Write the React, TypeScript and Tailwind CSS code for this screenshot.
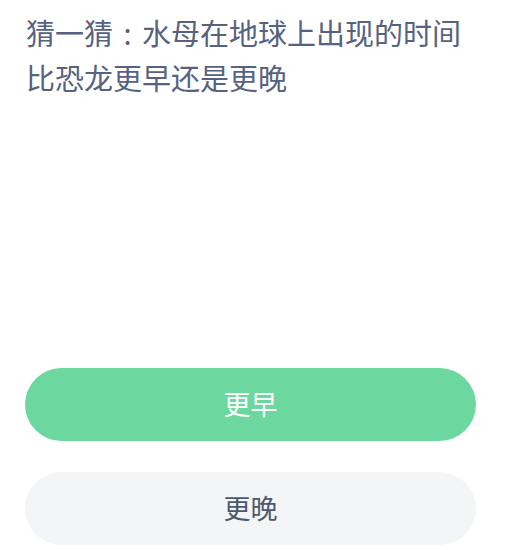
export default function App() {
  return (
    <div
      className="flex h-[550px] w-[506px] flex-col bg-white px-[25px]"
      style={{ fontFamily: '"Noto Sans CJK SC", "Noto Sans", sans-serif' }}
    >
      <h1 className="mt-[10px] pl-[1px] text-[29px] font-normal leading-[45px] text-[#56627f]">
        猜一猜<span className="inline-block w-[29px] text-center">:</span>水母在地球上出现的时间
        <br />
        比恐龙更早还是更晚
      </h1>

      <div className="flex-1" />

      <div className="flex flex-col gap-[31px] pb-[5px]">
        <button className="flex h-[73px] w-[451px] items-center justify-center rounded-full bg-[#6cd89f] text-[27px] text-white">
          更早
        </button>
        <button className="flex h-[73px] w-[451px] items-center justify-center rounded-full bg-[#f3f5f7] text-[27px] text-[#4d586c]">
          更晚
        </button>
      </div>
    </div>
  );
}
